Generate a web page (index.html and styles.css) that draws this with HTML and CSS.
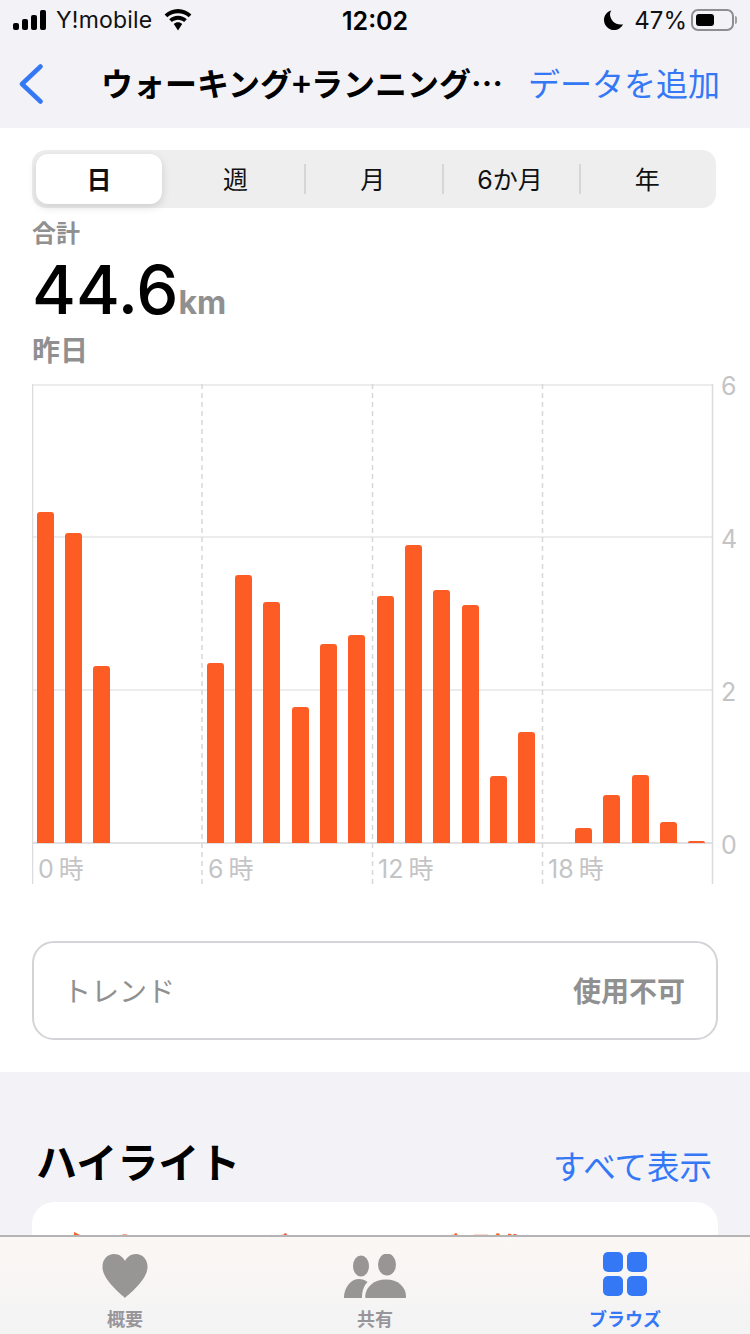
FILE: index.html
```html
<!DOCTYPE html>
<html lang="ja">
<head>
    <meta charset="UTF-8">
    <meta name="viewport" content="width=device-width, initial-scale=1.0">
    <title>ウォーキング+ランニング</title>
    <link rel="stylesheet" href="styles.css">
</head>
<body>
    <div class="phone">
        <div class="status-bar">
            <div class="status-left">
                <svg class="signal" width="34" height="20" viewBox="0 0 34 20">
                    <rect x="0" y="13" width="6" height="7" rx="2"/>
                    <rect x="9" y="9" width="6" height="11" rx="2"/>
                    <rect x="18" y="5" width="6" height="15" rx="2"/>
                    <rect x="27" y="0" width="6" height="20" rx="2"/>
                </svg>
                <span class="carrier">Y!mobile</span>
                <svg class="wifi" width="30" height="22" viewBox="0 0 30 22">
                    <path d="M15 4.2c4.100 0 7.800 1.500 10.700 4.100l2.700-2.900C24.800 2.100 20.100 0 15 0S5.200 2.100 1.600 5.400l2.700 2.900C7.200 5.700 10.900 4.200 15 4.200z"/>
                    <path d="M15 10.800c2.300 0 4.500.9 6.100 2.300l2.700-2.900C21.500 8 18.400 6.700 15 6.700s-6.500 1.300-8.800 3.500l2.700 2.900c1.600-1.400 3.800-2.300 6.100-2.300z"/>
                    <path d="M15 13.300c-1.600 0-3 .6-4.200 1.600L15 21.400l4.200-6.500c-1.200-1-2.600-1.600-4.200-1.600z"/>
                </svg>
            </div>
            <span class="clock">12:02</span>
            <div class="status-right">
                <svg class="moon" width="20" height="20" viewBox="0 0 20 20">
                    <path d="M7.300 0.400C3 1.500 0 5.400 0 9.900 0 15.400 4.500 20 10 20c3.900 0 7.400-2.300 9-5.800-.8.2-1.600.3-2.500.3C10.700 14.500 6 9.800 6 4c0-1.300.5-2.500 1.300-3.600z"/>
                </svg>
                <span class="percent">47%</span>
                <div class="battery"><div class="battery-level"></div></div>
                <div class="battery-nub"></div>
            </div>
        </div>

        <div class="nav-bar">
            <svg class="back" width="26" height="40" viewBox="0 0 26 40">
                <path d="M22.500 2.500L4 20l18.500 17.500" fill="none" stroke="#3478f6" stroke-width="4.500" stroke-linecap="round" stroke-linejoin="round"/>
            </svg>
            <div class="nav-title">ウォーキング+ランニング…</div>
            <div class="nav-action">データを追加</div>
        </div>

        <div class="detail">
            <div class="segments">
                <div class="segment selected">日</div>
                <div class="segment">週</div>
                <div class="segment divided">月</div>
                <div class="segment divided">6か月</div>
                <div class="segment divided">年</div>
            </div>

            <div class="summary-label">合計</div>
            <div class="summary-value">44.6<span class="summary-unit">km</span></div>
            <div class="summary-date">昨日</div>

            <div class="chart">
                <svg class="chart-grid" width="684" height="500" viewBox="0 0 684 500">
                    <g stroke="#ececee" stroke-width="2">
                        <line x1="0" y1="1" x2="680" y2="1"/>
                        <line x1="0" y1="153" x2="680" y2="153"/>
                        <line x1="0" y1="306" x2="680" y2="306"/>
                    </g>
                    <line x1="0" y1="459" x2="680" y2="459" stroke="#e0e0e2" stroke-width="2"/>
                    <line x1="0.500" y1="0" x2="0.500" y2="500" stroke="#dcdcde" stroke-width="1.500"/>
                    <line x1="680.500" y1="0" x2="680.500" y2="500" stroke="#dcdcde" stroke-width="1.500"/>
                    <g stroke="#d8d8da" stroke-width="1.500" stroke-dasharray="5 4">
                        <line x1="170" y1="0" x2="170" y2="500"/>
                        <line x1="340.500" y1="0" x2="340.500" y2="500"/>
                        <line x1="510.500" y1="0" x2="510.500" y2="500"/>
                    </g>
                </svg>
                <div class="bars">
                    <div class="bar-slot"><div class="bar" style="height:331px"></div></div>
                    <div class="bar-slot"><div class="bar" style="height:310px"></div></div>
                    <div class="bar-slot"><div class="bar" style="height:177px"></div></div>
                    <div class="bar-slot"></div>
                    <div class="bar-slot"></div>
                    <div class="bar-slot"></div>
                    <div class="bar-slot"><div class="bar" style="height:180px"></div></div>
                    <div class="bar-slot"><div class="bar" style="height:268px"></div></div>
                    <div class="bar-slot"><div class="bar" style="height:241px"></div></div>
                    <div class="bar-slot"><div class="bar" style="height:136px"></div></div>
                    <div class="bar-slot"><div class="bar" style="height:199px"></div></div>
                    <div class="bar-slot"><div class="bar" style="height:208px"></div></div>
                    <div class="bar-slot"><div class="bar" style="height:247px"></div></div>
                    <div class="bar-slot"><div class="bar" style="height:298px"></div></div>
                    <div class="bar-slot"><div class="bar" style="height:253px"></div></div>
                    <div class="bar-slot"><div class="bar" style="height:238px"></div></div>
                    <div class="bar-slot"><div class="bar" style="height:67px"></div></div>
                    <div class="bar-slot"><div class="bar" style="height:111px"></div></div>
                    <div class="bar-slot"></div>
                    <div class="bar-slot"><div class="bar" style="height:15px"></div></div>
                    <div class="bar-slot"><div class="bar" style="height:48px"></div></div>
                    <div class="bar-slot"><div class="bar" style="height:68px"></div></div>
                    <div class="bar-slot"><div class="bar" style="height:21px"></div></div>
                    <div class="bar-slot"><div class="bar" style="height:2px"></div></div>
                </div>
                <div class="x-axis">
                    <span>0 時</span>
                    <span>6 時</span>
                    <span>12 時</span>
                    <span>18 時</span>
                </div>
                <div class="y-axis">
                    <span>6</span>
                    <span>4</span>
                    <span>2</span>
                    <span>0</span>
                </div>
            </div>

            <div class="trend">
                <span class="trend-name">トレンド</span>
                <span class="trend-state">使用不可</span>
            </div>
        </div>

        <div class="highlights">
            <div class="highlights-head">
                <h2>ハイライト</h2>
                <span class="show-all">すべて表示</span>
            </div>
            <div class="highlight-card">
                <div class="highlight-title">
                    <svg width="22" height="24" viewBox="0 0 22 24"><path d="M0 0l18 9 4 3-22 12z"/></svg>
                    <span>ウォーキング+ランニング距離</span>
                </div>
            </div>
        </div>

        <div class="tab-bar">
            <div class="tab">
                <svg width="46" height="44" viewBox="0 0 46 44">
                    <path d="M23 44C21.500 42 1 27 .5 13.500.2 5.500 5.500 0 12 0c5 0 9 2.800 11 7 2-4.200 6-7 11-7 6.500 0 11.800 5.500 11.500 13.500C45 27 24.500 42 23 44z"/>
                </svg>
                <span>概要</span>
            </div>
            <div class="tab">
                <svg width="62" height="44" viewBox="0 0 62 44">
                    <ellipse cx="17" cy="12" rx="8" ry="10.500"/>
                    <ellipse cx="43" cy="10.500" rx="9" ry="11"/>
                    <path d="M0 44c0-1 0-3 .5-5C2.500 31 8 25 15 25c3.500 0 6 1 8.500 3-3.500 3.500-5.500 9-5.500 16H0z"/>
                    <path d="M22 44c-.500 0-.800-.5-.800-1.500C21.500 33 30 25.500 42 25.500S62 33 62 42.500c0 1-.3 1.500-1 1.500H22z"/>
                </svg>
                <span>共有</span>
            </div>
            <div class="tab active">
                <svg width="44" height="44" viewBox="0 0 44 44">
                    <rect x="0" y="0" width="20" height="20" rx="5"/>
                    <rect x="24" y="0" width="20" height="20" rx="5"/>
                    <rect x="0" y="24" width="20" height="20" rx="5"/>
                    <rect x="24" y="24" width="20" height="20" rx="5"/>
                </svg>
                <span>ブラウズ</span>
            </div>
        </div>
    </div>
</body>
</html>
```

FILE: styles.css
```css
/* General Styles */
html, body {
    margin: 0;
    padding: 0;
}

body {
    font-family: Inter, "Noto Sans CJK JP", sans-serif;
    background-color: #f2f2f7;
    color: #000;
}

.phone {
    position: relative;
    width: 750px;
    height: 1334px;
    overflow: hidden;
    background-color: #f2f2f7;
}

/* Status Bar */
.status-bar {
    display: flex;
    justify-content: space-between;
    align-items: center;
    height: 40px;
    padding: 0 13px;
    box-sizing: border-box;
    position: relative;
}

.status-left, .status-right {
    display: flex;
    align-items: center;
}

.carrier {
    margin-left: 9px;
    font-size: 23px;
    letter-spacing: 0.2px;
    color: #111;
}

.wifi {
    margin-left: 11px;
}

.clock {
    position: absolute;
    left: 342px;
    top: 5px;
    font-size: 25px;
    font-weight: 600;
    line-height: 32px;
}

.percent {
    margin-left: 10px;
    font-size: 24px;
    color: #111;
}

.battery {
    width: 43px;
    height: 22px;
    margin-left: 4px;
    padding: 3px;
    box-sizing: border-box;
    border: 2px solid #8e8e90;
    border-radius: 7px;
}

.battery-level {
    width: 18px;
    height: 12px;
    margin: 0;
    background-color: #000;
    border-radius: 3px;
}

.battery-nub {
    width: 2px;
    height: 8px;
    margin-left: 1px;
    background-color: #a0a0a2;
    border-radius: 0 2px 2px 0;
}

/* Navigation */
.nav-bar {
    display: flex;
    align-items: center;
    height: 88px;
    padding-left: 18px;
}

.back {
    flex: none;
}

.nav-title {
    width: 426px;
    margin: 0 0 4px 57px;
    font-family: "Noto Sans CJK JP", sans-serif;
    font-size: 32px;
    line-height: 44px;
    font-weight: 700;
    white-space: nowrap;
    overflow: visible;
}

.nav-action {
    margin: 0 0 4px 1px;
    font-family: "Noto Sans CJK JP", sans-serif;
    font-size: 32px;
    line-height: 44px;
    color: #3478f6;
    white-space: nowrap;
}

/* Main Detail Section */
.detail {
    height: 944px;
    padding: 22px 32px 0;
    box-sizing: border-box;
    background-color: #fff;
}

.segments {
    display: flex;
    width: 684px;
    height: 58px;
    background-color: #eeeeef;
    border-radius: 14px;
}

.segment {
    position: relative;
    flex: 1;
    display: flex;
    align-items: center;
    justify-content: center;
    padding-bottom: 3px;
    box-sizing: border-box;
    font-size: 25px;
    color: #111;
}

.segment.selected {
    flex: none;
    width: 126px;
    height: 50px;
    margin: 4px 5px 4px 4px;
    background-color: #fff;
    border-radius: 12px;
    box-shadow: 0 3px 8px rgba(0, 0, 0, 0.14);
    font-weight: 600;
}

.segment.divided::before {
    content: "";
    position: absolute;
    left: 0;
    top: 14px;
    height: 30px;
    width: 2px;
    background-color: #d6d6d8;
}

.summary-label {
    margin: 10px 0 10px;
    font-size: 24px;
    line-height: 32px;
    font-weight: 700;
    color: #909090;
}

.summary-value {
    font-size: 67px;
    line-height: 60px;
    font-weight: 500;
}

.summary-unit {
    font-size: 32px;
    font-weight: 700;
    color: #909090;
}

.summary-date {
    font-size: 28px;
    line-height: 36px;
    font-weight: 700;
    color: #909090;
}

/* Chart */
.chart {
    position: relative;
    width: 684px;
    height: 500px;
    margin-top: 15px;
}

.chart-grid {
    position: absolute;
    left: 0;
    top: 0;
}

.bars {
    position: relative;
    display: grid;
    grid-template-columns: repeat(24, 28.33px);
    align-items: end;
    height: 459px;
}

.bar-slot {
    padding-left: 4.7px;
}

.bar {
    width: 17px;
    background-color: #fe5c25;
    border-radius: 3px 3px 0 0;
}

.x-axis {
    position: relative;
    display: grid;
    grid-template-columns: repeat(4, 170px);
    margin-top: 8px;
    font-size: 25px;
    line-height: 36px;
    word-spacing: -2px;
    color: #c4c4c6;
}

.x-axis span {
    padding-left: 6px;
}

.y-axis {
    position: absolute;
    left: 689px;
    top: -16px;
    display: flex;
    flex-direction: column;
    gap: 117px;
    font-size: 25px;
    line-height: 36px;
    color: #c4c4c6;
}

/* Trend */
.trend {
    display: flex;
    justify-content: space-between;
    align-items: center;
    width: 686px;
    height: 99px;
    margin-top: 57px;
    padding: 0 31px 2px 29px;
    box-sizing: border-box;
    border: 2px solid #d4d4d8;
    border-radius: 22px;
    font-size: 28px;
}

.trend-name {
    color: #909090;
}

.trend-state {
    font-weight: 700;
    color: #909090;
}

/* Highlights */
.highlights {
    padding: 0 32px;
}

.highlights-head {
    display: flex;
    justify-content: space-between;
    align-items: center;
    height: 130px;
    padding: 0 6px 0 4px;
}

.highlights-head h2 {
    margin: 46px 0 0;
    font-size: 41px;
    font-weight: 700;
}

.show-all {
    margin-top: 54px;
    font-size: 32.500px;
    color: #3478f6;
}

.highlight-card {
    width: 686px;
    height: 160px;
    background-color: #fff;
    border-radius: 22px;
}

.highlight-title {
    display: flex;
    align-items: flex-start;
    gap: 14px;
    padding: 24px 0 0 42px;
    font-size: 30px;
    line-height: 44px;
    font-weight: 700;
    color: #fe5c25;
}

.highlight-title svg {
    margin-top: 6px;
    fill: #fe5c25;
}

/* Tab Bar */
.tab-bar {
    position: absolute;
    left: 0;
    right: 0;
    bottom: 0;
    height: 99px;
    display: grid;
    grid-template-columns: 250px 250px 250px;
    box-sizing: border-box;
    border-top: 2px solid #b4b4b6;
    background: linear-gradient(180deg, rgba(255, 246, 240, 0.5), rgba(240, 240, 242, 0.6)), #f8f8f8;
}

.tab {
    display: flex;
    flex-direction: column;
    align-items: center;
    padding-top: 17px;
    font-size: 18px;
    font-weight: 700;
    color: #98969a;
}

.tab svg {
    fill: #989694;
}

.tab span {
    margin-top: 7px;
}

.tab.active {
    padding-top: 15px;
    color: #3478f6;
}

.tab.active span {
    margin-top: 9px;
}

.tab.active svg {
    fill: #3478f6;
}
```
